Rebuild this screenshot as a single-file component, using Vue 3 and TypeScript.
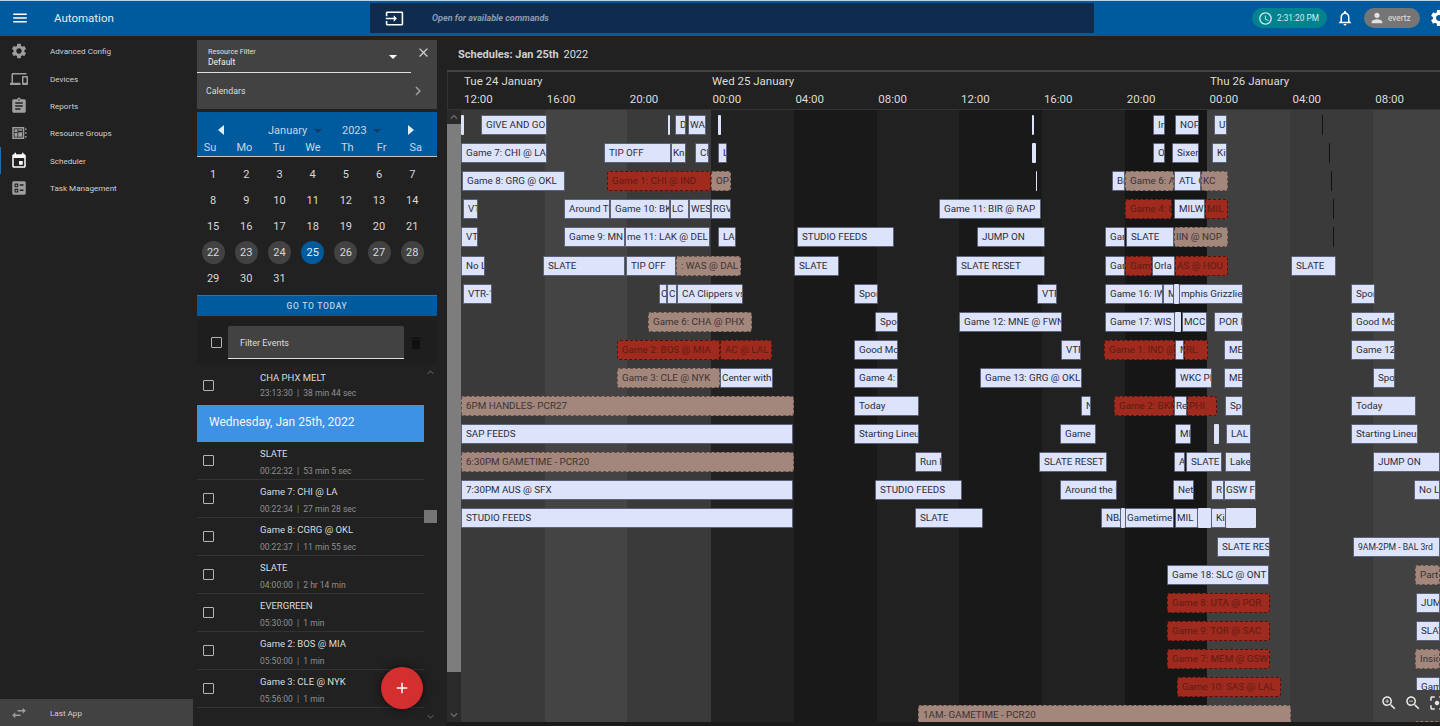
<script setup lang="ts">
// Automation scheduler view: side nav, calendar + event list, timeline
type Kind = 'b' | 'o' | 'r' | 'k'
type Ev = [number, number, number, string, Kind?]

const icons = {
  menu: 'M3 18h18v-2H3v2zm0-5h18v-2H3v2zm0-7v2h18V6H3z',
  gear: 'M19.14 12.94c.04-.3.06-.61.06-.94 0-.32-.02-.64-.07-.94l2.03-1.58c.18-.14.23-.41.12-.61l-1.92-3.32c-.12-.22-.37-.29-.59-.22l-2.39.96c-.5-.38-1.03-.7-1.62-.94l-.36-2.54c-.04-.24-.24-.41-.48-.41h-3.84c-.24 0-.43.17-.47.41l-.36 2.54c-.59.24-1.13.57-1.62.94l-2.39-.96c-.22-.08-.47 0-.59.22L2.74 8.87c-.12.21-.08.47.12.61l2.03 1.58c-.05.3-.09.63-.09.94s.02.64.07.94l-2.03 1.58c-.18.14-.23.41-.12.61l1.92 3.32c.12.22.37.29.59.22l2.39-.96c.5.38 1.03.7 1.62.94l.36 2.54c.05.24.24.41.48.41h3.84c.24 0 .44-.17.47-.41l.36-2.54c.59-.24 1.13-.56 1.62-.94l2.39.96c.22.08.47 0 .59-.22l1.92-3.32c.12-.22.07-.47-.12-.61l-2.01-1.58zM12 15.6c-1.98 0-3.6-1.62-3.6-3.6s1.62-3.6 3.6-3.6 3.6 1.62 3.6 3.6-1.62 3.6-3.6 3.6z',
  devices: 'M4 6h18V4H4c-1.1 0-2 .9-2 2v11H0v3h14v-3H4V6zm19 2h-6c-.55 0-1 .45-1 1v10c0 .55.45 1 1 1h6c.55 0 1-.45 1-1V9c0-.55-.45-1-1-1zm-1 9h-4v-7h4v7z',
  reports: 'M19 3h-4.18C14.4 1.84 13.3 1 12 1c-1.3 0-2.4.84-2.82 2H5c-1.1 0-2 .9-2 2v14c0 1.1.9 2 2 2h14c1.1 0 2-.9 2-2V5c0-1.1-.9-2-2-2zm-7 0c.55 0 1 .45 1 1s-.45 1-1 1-1-.45-1-1 .45-1 1-1zm2 14H7v-2h7v2zm3-4H7v-2h10v2zm0-4H7V7h10v2z',
  groups: 'M3 4h16v16H3V4zm2 2v12h12V6H5zm1 1h4v4H6V7zm5 0h5v2h-5V7zm-5 5h4v5H6v-5zm5-1h5v6h-5v-6zM20 6h2v2h-2V6zm0 5h2v2h-2v-2zm0 5h2v2h-2v-2z',
  event: 'M17 12h-5v5h5v-5zM16 1v2H8V1H6v2H5c-1.11 0-1.99.9-1.99 2L3 19c0 1.1.89 2 2 2h14c1.1 0 2-.9 2-2V5c0-1.1-.9-2-2-2h-1V1h-2zm3 18H5V8h14v11z',
  tasks: 'M5 3h14c1.1 0 2 .9 2 2v14c0 1.1-.9 2-2 2H5c-1.1 0-2-.9-2-2V5c0-1.1.9-2 2-2zm1 3v5h5V6H6zm1.5 1.5h2v2h-2v-2zM13 7v2h5V7h-5zm-7 6v5h5v-5H6zm1.5 1.5h2v2h-2v-2zM13 14v2h5v-2h-5z',
  swap: 'M6.99 11L3 15l3.99 4v-3H14v-2H6.99v-3zM21 9l-3.99-4v3H10v2h7.01v3L21 9z',
  input: 'M21 3.01H3c-1.1 0-2 .9-2 2V9h2V4.99h18v14.03H3V15H1v4.01c0 1.1.9 1.98 2 1.98h18c1.1 0 2-.88 2-1.98v-14c0-1.11-.9-2-2-2zM11 16l4-4-4-4v3H1v2h10v3z',
  bell: 'M12 22c1.1 0 2-.9 2-2h-4c0 1.1.9 2 2 2zm6-6v-5c0-3.07-1.63-5.64-4.5-6.32V4c0-.83-.67-1.5-1.5-1.5s-1.5.67-1.5 1.5v.68C7.64 5.36 6 7.92 6 11v5l-2 2v1h16v-1l-2-2zm-2 1H8v-6c0-2.48 1.51-4.5 4-4.5s4 2.02 4 4.5v6z',
  person: 'M12 12c2.21 0 4-1.79 4-4s-1.79-4-4-4-4 1.79-4 4 1.79 4 4 4zm0 2c-2.67 0-8 1.34-8 4v2h16v-2c0-2.66-5.33-4-8-4z',
  clock: 'M11.99 2C6.47 2 2 6.48 2 12s4.47 10 9.99 10C17.52 22 22 17.52 22 12S17.52 2 11.99 2zM12 20c-4.42 0-8-3.58-8-8s3.58-8 8-8 8 3.58 8 8-3.58 8-8 8zm.5-13H11v6l5.25 3.15.75-1.23-4.5-2.67z',
  trash: 'M6 19c0 1.1.9 2 2 2h8c1.1 0 2-.9 2-2V7H6v12zM19 4h-3.5l-1-1h-5l-1 1H5v2h14V4z',
  close: 'M19 6.41L17.59 5 12 10.59 6.41 5 5 6.41 10.59 12 5 17.59 6.41 19 12 13.41 17.59 19 19 17.59 13.41 12z',
  right: 'M10 6L8.59 7.41 13.17 12l-4.58 4.59L10 18l6-6z',
  plus: 'M19 13h-6v6h-2v-6H5v-2h6V5h2v6h6v2z',
  up: 'M12 8l-6 6 1.41 1.41L12 10.83l4.59 4.58L18 14z',
  down: 'M16.59 8.59L12 13.17 7.41 8.59 6 10l6 6 6-6z',
  zoomIn: 'M15.5 14h-.79l-.28-.27C15.41 12.59 16 11.11 16 9.5 16 5.91 13.09 3 9.5 3S3 5.91 3 9.5 5.91 16 9.5 16c1.61 0 3.09-.59 4.23-1.57l.27.28v.79l5 4.99L20.49 19l-4.99-5zm-6 0C7.01 14 5 11.99 5 9.5S7.01 5 9.5 5 14 7.01 14 9.5 11.99 14 9.5 14zm2.5-4h-2v2H9v-2H7V9h2V7h1v2h2v1z',
  zoomOut: 'M15.5 14h-.79l-.28-.27C15.41 12.59 16 11.11 16 9.5 16 5.91 13.09 3 9.5 3S3 5.91 3 9.5 5.91 16 9.5 16c1.61 0 3.09-.59 4.23-1.57l.27.28v.79l5 4.99L20.49 19l-4.99-5zm-6 0C7.01 14 5 11.99 5 9.5S7.01 5 9.5 5 14 7.01 14 9.5 11.99 14 9.5 14zM7 9h5v1H7z',
  fit: 'M5 15H3v4c0 1.1.9 2 2 2h4v-2H5v-4zM5 5h4V3H5c-1.1 0-2 .9-2 2v4h2V5zm14-2h-4v2h4v4h2V5c0-1.1-.9-2-2-2zm0 16h-4v2h4c1.1 0 2-.9 2-2v-4h-2v4zM12 9c-1.66 0-3 1.34-3 3s1.34 3 3 3 3-1.34 3-3-1.34-3-3-3z',
}

const navItems = [
  { label: 'Advanced Config', icon: icons.gear },
  { label: 'Devices', icon: icons.devices },
  { label: 'Reports', icon: icons.reports },
  { label: 'Resource Groups', icon: icons.groups },
  { label: 'Scheduler', icon: icons.event, active: true },
  { label: 'Task Management', icon: icons.tasks },
]

const weekDays = ['Su', 'Mo', 'Tu', 'We', 'Th', 'Fr', 'Sa']
const days = Array.from({ length: 31 }, (_, i) => i + 1)

const firstRowSub = '23:13:30  |  38 min 44 sec'
const listItems = [
  { title: 'SLATE', sub: '00:22:32  |  53 min 5 sec' },
  { title: 'Game 7: CHI @ LA', sub: '00:22:34  |  27 min 28 sec' },
  { title: 'Game 8: CGRG @ OKL', sub: '00:22:37  |  11 min 55 sec' },
  { title: 'SLATE', sub: '04:00:00  |  2 hr 14 min' },
  { title: 'EVERGREEN', sub: '05:30:00  |  1 min' },
  { title: 'Game 2: BOS @ MIA', sub: '05:50:00  |  1 min' },
  { title: 'Game 3: CLE @ NYK', sub: '05:56:00  |  1 min' },
]

const hours = ['12:00', '16:00', '20:00', '00:00', '04:00', '08:00', '12:00', '16:00', '20:00', '00:00', '04:00', '08:00']
const stripes = [
  [84, '#3a3a3a'], [82, '#444444'], [84, '#3a3a3a'], [83, '#222222'],
  [83, '#191919'], [82, '#212121'], [83, '#191919'], [83, '#212121'],
  [82, '#161616'], [83, '#404040'], [83, '#3a3a3a'], [67, '#424242'],
] as const

// these labels sit almost against the left edge of their box
const tight = new Set(['Kni', 'LC', 'WES', 'RGV', 'C', 'KC', 'MIL', 'Gametime', 'GSW F', 'Center with', 'MCC', 'AS @ HOU', 'IIN @ NOP', 'mphis Grizzlie', 'me 11: LAK @ DEL', 'RL', 'PHI', 'Re', 'Orla', 'WA'])

// [row, x from, x to, text, kind] - x is in page pixels, the grid starts at 461
const events: Ev[] = [
  [0, 461, 464, ''], [0, 481, 547, 'GIVE AND GO'], [0, 668, 670, ''], [0, 675, 686, 'D'], [0, 688, 706, 'WA'], [0, 718, 721, ''],
  [0, 1032, 1034, ''], [0, 1153, 1165, 'In'], [0, 1175, 1199, 'NOP'], [0, 1214, 1227, 'UT'], [0, 1322, 1323, '', 'k'],
  [1, 461, 547, 'Game 7: CHI @ LA'], [1, 604, 671, 'TIP OFF'], [1, 671, 686, 'Kni'], [1, 695, 709, 'Cl'], [1, 718, 727, 'L'],
  [1, 1032, 1036, ''], [1, 1153, 1165, 'Or'], [1, 1172, 1199, 'Sixers'], [1, 1212, 1227, 'Kin'], [1, 1329, 1330, '', 'k'],
  [2, 462, 565, 'Game 8: GRG @ OKL'], [2, 607, 711, 'Game 1: CHI @ IND', 'r'], [2, 711, 731, 'OP', 'o'], [2, 1036, 1037, ''],
  [2, 1112, 1125, 'Br'], [2, 1125, 1174, 'Game 6: A', 'o'], [2, 1201, 1228, 'KC', 'o'], [2, 1174, 1201, 'ATL O'], [2, 1331, 1332, '', 'k'],
  [3, 463, 478, 'VT'], [3, 564, 610, 'Around Th'], [3, 610, 670, 'Game 10: BK'], [3, 670, 689, 'LC'], [3, 689, 711, 'WES'], [3, 711, 731, 'RGV'],
  [3, 939, 1041, 'Game 11: BIR @ RAP'], [3, 1125, 1172, 'Game 4: D', 'r'], [3, 1205, 1228, 'MIL', 'r'], [3, 1174, 1205, 'MILW'], [3, 1333, 1334, '', 'k'],
  [4, 461, 478, 'VT'], [4, 564, 625, 'Game 9: MN'], [4, 625, 710, 'me 11: LAK @ DEL'], [4, 718, 736, 'LA'], [4, 797, 894, 'STUDIO FEEDS'],
  [4, 977, 1045, 'JUMP ON'], [4, 1105, 1125, 'Gar'], [4, 1174, 1228, 'IIN @ NOP', 'o'], [4, 1126, 1174, 'SLATE'], [4, 1333, 1334, '', 'k'],
  [5, 461, 485, 'No L'], [5, 543, 625, 'SLATE'], [5, 626, 676, 'TIP OFF'], [5, 676, 741, ': WAS @ DAL', 'o'], [5, 794, 839, 'SLATE'],
  [5, 956, 1045, 'SLATE RESET'], [5, 1105, 1125, 'Gar'], [5, 1125, 1152, 'Game', 'r'], [5, 1175, 1228, 'AS @ HOU', 'r'], [5, 1152, 1175, 'Orla'], [5, 1291, 1336, 'SLATE'],
  [6, 463, 492, 'VTR-1'], [6, 659, 667, 'C'], [6, 667, 677, 'C'], [6, 677, 743, 'CA Clippers vs L'], [6, 854, 878, 'Spor'], [6, 1037, 1057, 'VTR'],
  [6, 1105, 1163, 'Game 16: IW'], [6, 1163, 1174, 'M'], [6, 1174, 1179, ''], [6, 1179, 1243, 'mphis Grizzlie'], [6, 1351, 1375, 'Spor'],
  [7, 648, 752, 'Game 6: CHA @ PHX', 'o'], [7, 875, 898, 'Spor'], [7, 959, 1062, 'Game 12: MNE @ FWN'], [7, 1105, 1175, 'Game 17: WIS'], [7, 1175, 1181, ''],
  [7, 1182, 1207, 'MCC'], [7, 1214, 1243, 'POR F'], [7, 1351, 1395, 'Good Mo'],
  [8, 617, 720, 'Game 2: BOS @ MIA', 'r'], [8, 720, 772, 'AC @ LAL', 'r'], [8, 854, 898, 'Good Mo'], [8, 1061, 1081, 'VTF'], [8, 1104, 1175, 'Game 1: IND @', 'r'],
  [8, 1184, 1208, 'RL', 'r'], [8, 1175, 1184, 'M'], [8, 1224, 1243, 'MEI'], [8, 1351, 1395, 'Game 12'],
  [9, 617, 720, 'Game 3: CLE @ NYK', 'o'], [9, 720, 773, 'Center with'], [9, 854, 898, 'Game 4:'], [9, 980, 1082, 'Game 13: GRG @ OKL'],
  [9, 1175, 1212, 'WKC PR'], [9, 1224, 1243, 'MEI'], [9, 1373, 1395, 'Spor'],
  [10, 461, 794, '6PM HANDLES- PCR27', 'o'], [10, 854, 919, 'Today'], [10, 1081, 1091, 'N'], [10, 1114, 1174, 'Game 2: BKN', 'r'], [10, 1187, 1217, 'PHI', 'r'],
  [10, 1174, 1187, 'Re'], [10, 1225, 1243, 'Spr'], [10, 1351, 1416, 'Today'],
  [11, 461, 793, 'SAP FEEDS'], [11, 854, 919, 'Starting Lineu'], [11, 1060, 1096, 'Game'], [11, 1175, 1191, 'MII'], [11, 1214, 1219, ''], [11, 1226, 1251, 'LAL I'], [11, 1351, 1418, 'Starting Lineup'],
  [12, 461, 794, '6:30PM GAMETIME - PCR20', 'o'], [12, 915, 942, 'Run H'], [12, 1039, 1107, 'SLATE RESET'], [12, 1174, 1185, 'A'], [12, 1186, 1222, 'SLATE'], [12, 1225, 1251, 'Laker'], [12, 1373, 1440, 'JUMP ON'],
  [13, 461, 793, '7:30PM AUS @ SFX'], [13, 875, 962, 'STUDIO FEEDS'], [13, 1060, 1117, 'Around the H'], [13, 1173, 1194, 'Nets'], [13, 1211, 1224, 'R'], [13, 1224, 1256, 'GSW F'], [13, 1414, 1440, 'No Le'],
  [14, 461, 793, 'STUDIO FEEDS'], [14, 915, 983, 'SLATE'], [14, 1101, 1121, 'NBA'], [14, 1121, 1125, ''], [14, 1125, 1174, 'Gametime'], [14, 1175, 1198, 'MIL'],
  [14, 1198, 1211, ''], [14, 1211, 1226, 'Kin'], [14, 1226, 1256, ''],
  [15, 1217, 1270, 'SLATE RES'], [15, 1353, 1440, '9AM-2PM - BAL 3rd'],
  [16, 1167, 1269, 'Game 18: SLC @ ONT'], [16, 1415, 1440, 'Part', 'o'],
  [17, 1167, 1270, 'Game 8: UTA @ POR', 'r'], [17, 1416, 1440, 'JUM'],
  [18, 1167, 1270, 'Game 9: TOR @ SAC', 'r'], [18, 1416, 1440, 'SLAT'],
  [19, 1167, 1270, 'Game 7: MEM @ GSW', 'r'], [19, 1415, 1440, 'Insid', 'o'],
  [20, 1177, 1281, 'Game 10: SAS @ LAL', 'r'], [20, 1416, 1440, 'Game'],
  [21, 918, 1291, '1AM- GAMETIME - PCR20', 'o'], [21.55, 1415, 1440, '', 'o'],
]

function evStyle(e: Ev) {
  return { left: `${e[1] - 461}px`, width: `${e[2] - e[1]}px`, top: `${5 + e[0] * 28.1}px` }
}
</script>

<template>
  <div class="app">
    <header class="topbar">
      <div class="top-left">
        <svg class="ico menu" viewBox="0 0 24 24"><path :d="icons.menu" /></svg>
        <span class="app-title">Automation</span>
      </div>
      <div class="command">
        <svg class="ico cmd-ico" viewBox="0 0 24 24"><path :d="icons.input" /></svg>
        <span class="cmd-text">Open for available commands</span>
      </div>
      <div class="top-right">
        <div class="pill clock">
          <svg class="ico" viewBox="0 0 24 24"><path :d="icons.clock" /></svg>
          <span>2:31:20 PM</span>
        </div>
        <svg class="ico bell" viewBox="0 0 24 24"><path :d="icons.bell" /></svg>
        <div class="pill user">
          <svg class="ico" viewBox="0 0 24 24"><path :d="icons.person" /></svg>
          <span>evertz</span>
        </div>
        <svg class="ico top-gear" viewBox="0 0 24 24"><path :d="icons.gear" /></svg>
      </div>
    </header>

    <div class="body">
      <nav class="sidenav">
        <div class="nav-list">
          <div v-for="item in navItems" :key="item.label" class="nav-item" :class="{ active: item.active }">
            <svg class="ico" viewBox="0 0 24 24"><path :d="item.icon" /></svg>
            <span>{{ item.label }}</span>
          </div>
        </div>
        <div class="nav-item last-app">
          <svg class="ico" viewBox="0 0 24 24"><path :d="icons.swap" /></svg>
          <span>Last App</span>
        </div>
      </nav>

      <section class="panel">
        <div class="filter-card">
          <div class="select-row">
            <div class="select">
              <div class="select-label">Resource Filter</div>
              <div class="select-value">Default</div>
              <span class="caret white"></span>
            </div>
            <svg class="ico close" viewBox="0 0 24 24"><path :d="icons.close" /></svg>
          </div>
          <div class="calendars-row">
            <span>Calendars</span>
            <svg class="ico" viewBox="0 0 24 24"><path :d="icons.right" /></svg>
          </div>
        </div>

        <div class="cal-head">
          <div class="cal-nav">
            <span class="tri left"></span>
            <span class="cal-sel month">January <i class="caret"></i></span>
            <span class="cal-sel">2023 <i class="caret"></i></span>
            <span class="tri right"></span>
          </div>
          <div class="cal-week">
            <span v-for="d in weekDays" :key="d">{{ d }}</span>
          </div>
        </div>
        <div class="cal-grid">
          <div v-for="d in days" :key="d" class="day">
            <span :class="{ inweek: d >= 22 && d <= 28, sel: d === 25 }">{{ d }}</span>
          </div>
        </div>
        <div class="today-btn">GO TO TODAY</div>

        <div class="filter-bar">
          <span class="check"></span>
          <div class="filter-input">Filter Events</div>
          <svg class="ico trash" viewBox="0 0 24 24"><path :d="icons.trash" /></svg>
        </div>

        <div class="list-wrap">
          <div class="list">
            <div class="row first">
              <span class="check"></span>
              <div class="row-text">
                <div class="row-title">CHA PHX MELT</div>
                <div class="row-sub">{{ firstRowSub }}</div>
              </div>
            </div>
            <div class="date-head">Wednesday, Jan 25th, 2022</div>
            <div v-for="item in listItems" :key="item.sub" class="row">
              <span class="check"></span>
              <div class="row-text">
                <div class="row-title">{{ item.title }}</div>
                <div class="row-sub">{{ item.sub }}</div>
              </div>
            </div>
          </div>
          <div class="list-scroll">
            <svg class="ico" viewBox="0 0 24 24"><path :d="icons.up" /></svg>
            <svg class="ico" viewBox="0 0 24 24"><path :d="icons.down" /></svg>
            <span class="list-thumb"></span>
          </div>
        </div>

        <button class="fab">
          <svg class="ico" viewBox="0 0 24 24"><path :d="icons.plus" /></svg>
        </button>
      </section>

      <main class="main">
        <div class="sched-title"><b>Schedules: Jan 25th</b> 2022</div>
        <div class="timeline">
          <div class="time-head">
            <div class="head-gutter"></div>
            <div class="head-scale">
              <div class="head-days">
                <span class="d1">Tue 24 January</span>
                <span class="d2">Wed 25 January</span>
                <span>Thu 26 January</span>
              </div>
              <div class="head-hours">
                <span v-for="(h, i) in hours" :key="i">{{ h }}</span>
              </div>
            </div>
          </div>
          <div class="time-body">
            <div class="v-scroll">
              <svg class="ico" viewBox="0 0 24 24"><path :d="icons.up" /></svg>
              <div class="v-thumb"></div>
              <svg class="ico" viewBox="0 0 24 24"><path :d="icons.down" /></svg>
            </div>
            <div class="canvas">
              <div class="stripes">
                <div v-for="(s, i) in stripes" :key="i" :style="{ width: `${s[0]}px`, background: s[1] }"></div>
              </div>
              <div class="zoom-box">
                <svg class="ico" viewBox="0 0 24 24"><path :d="icons.zoomIn" /></svg>
                <svg class="ico" viewBox="0 0 24 24"><path :d="icons.zoomOut" /></svg>
                <svg class="ico" viewBox="0 0 24 24"><path :d="icons.fit" /></svg>
              </div>
              <div
                v-for="(e, i) in events"
                :key="i"
                class="ev"
                :class="[e[4] ?? 'b', { tiny: e[1] === 1353, tight: tight.has(e[3]) }]"
                :style="evStyle(e)"
              >{{ e[3] }}</div>
            </div>
          </div>
        </div>
      </main>
    </div>
  </div>
</template>

<style>
html,
body {
  margin: 0;
  background: #212121;
  overflow: hidden;
}
</style>

<style scoped>
.app {
  width: 1440px;
  height: 726px;
  display: flex;
  flex-direction: column;
  overflow: hidden;
  font-family: Roboto, "Liberation Sans", sans-serif;
  color: #e0e0e0;
  background: #212121;
}

.ico {
  fill: currentColor;
  display: block;
  flex: none;
}

/* top bar */
.topbar {
  height: 34px;
  padding-bottom: 1px;
  flex: none;
  display: flex;
  align-items: center;
  background: #005a9e;
  border-top: 1px solid #b9d3e6;
  color: #fff;
}

.top-left {
  width: 370px;
  flex: none;
  display: flex;
  align-items: center;
}

.menu {
  width: 18px;
  height: 18px;
  margin-left: 11px;
}

.app-title {
  margin-left: 25px;
  font-size: 11.5px;
  color: #e3edf5;
}

.command {
  width: 724px;
  height: 30px;
  flex: none;
  display: flex;
  align-items: center;
  background: #0f2c4f;
}

.cmd-ico {
  width: 19px;
  height: 19px;
  margin-left: 15px;
}

.cmd-text {
  margin-left: 28px;
  font-size: 9px;
  font-style: italic;
  font-weight: 700;
  color: #8d9bab;
}

.top-right {
  flex: 1;
  min-width: 0;
  display: flex;
  align-items: center;
  overflow: hidden;
}

.pill {
  height: 20px;
  flex: none;
  border-radius: 10px;
  display: flex;
  align-items: center;
  font-size: 8.3px;
}

.clock {
  width: 75px;
  margin-left: 158px;
  background: #00838f;
  color: #d9eef0;
  padding-left: 6px;
  gap: 4px;
  box-sizing: border-box;
}

.clock .ico {
  width: 15px;
  height: 15px;
}

.bell {
  width: 18px;
  height: 18px;
  margin-left: 9px;
}

.user {
  width: 56px;
  margin-left: 10px;
  background: #757575;
  color: #e0e0e0;
  padding-left: 5px;
  gap: 3px;
  box-sizing: border-box;
}

.user .ico {
  width: 16px;
  height: 16px;
}

.top-gear {
  width: 20px;
  height: 20px;
  margin-left: 9px;
}

.body {
  flex: 1;
  display: flex;
  min-height: 0;
}

/* side nav */
.sidenav {
  width: 193px;
  flex: none;
  display: flex;
  flex-direction: column;
}

.nav-list {
  flex: 1;
  padding-top: 1.5px;
}

.nav-item {
  height: 27.4px;
  display: flex;
  align-items: center;
  font-size: 8.1px;
  color: #d0d0d0;
  box-sizing: border-box;
  padding-left: 10px;
}

.nav-item .ico {
  width: 18px;
  height: 18px;
  color: #9e9e9e;
  margin-right: 22px;
}

.nav-item.active {
  border-left: 1px solid #1a6fb0;
  padding-left: 9px;
}

.nav-item.active .ico {
  color: #fff;
}

.last-app {
  height: 27px;
  background: #424242;
}

/* middle panel */
.panel {
  width: 240px;
  flex: none;
  margin-left: 4px;
  padding-top: 4px;
  display: flex;
  flex-direction: column;
  position: relative;
  min-height: 0;
}

.filter-card {
  height: 69px;
  flex: none;
  background: #424242;
}

.select-row {
  display: flex;
  height: 33px;
}

.select {
  width: 214px;
  box-sizing: border-box;
  padding: 7px 0 0 11px;
  border-bottom: 1px solid #e0e0e0;
  position: relative;
}

.select-label {
  font-size: 7.2px;
  color: #e0e0e0;
}

.select-value {
  font-size: 8.5px;
  margin-top: 1px;
  color: #f0f0f0;
}

.caret {
  display: inline-block;
  width: 0;
  height: 0;
  border-left: 4px solid transparent;
  border-right: 4px solid transparent;
  border-top: 4px solid #0f3d66;
  vertical-align: middle;
  margin-left: 4px;
}

.caret.white {
  position: absolute;
  right: 14px;
  top: 15px;
  border-top-color: #fff;
}

.close {
  width: 15px;
  height: 15px;
  margin: 5px 0 0 5px;
  color: #cfcfcf;
}

.calendars-row {
  height: 36px;
  display: flex;
  align-items: center;
  justify-content: space-between;
  padding: 0 9px;
  font-size: 8.8px;
  color: #dcdcdc;
}

.calendars-row .ico {
  width: 18px;
  height: 18px;
  color: #9e9e9e;
  margin-right: 1px;
}

.cal-head {
  margin-top: 3px;
  height: 44px;
  flex: none;
  background: #005a9e;
  border-bottom: 1px solid #c4c4c4;
  box-sizing: content-box;
}

.cal-nav {
  height: 28px;
  display: flex;
  align-items: center;
  font-size: 11px;
  color: #c7d8e6;
  box-sizing: border-box;
  padding-top: 8px;
}

.cal-sel {
  margin-left: 15px;
  white-space: nowrap;
}

.cal-sel.month {
  margin-left: 44px;
  width: 59px;
}

.tri {
  width: 0;
  height: 0;
  border-top: 5px solid transparent;
  border-bottom: 5px solid transparent;
}

.tri.left {
  margin-left: 21px;
  border-right: 6px solid #e6eef5;
}

.tri.right {
  margin-left: 27px;
  border-left: 6px solid #e6eef5;
}

.cal-week {
  display: grid;
  grid-template-columns: repeat(7, 1fr);
  text-align: center;
  font-size: 11px;
  color: #c7d8e6;
  margin: 1px 4px 0 -4px;
}

.cal-grid {
  display: grid;
  grid-template-columns: repeat(7, 33.2px);
  grid-auto-rows: 26px;
  padding-top: 4px;
  height: 134px;
  flex: none;
  box-sizing: border-box;
  margin-left: -0.5px;
}

.day {
  display: flex;
  align-items: center;
  justify-content: center;
  font-size: 11px;
  color: #d8d8d8;
}

.day span {
  width: 23px;
  height: 23px;
  flex: none;
  border-radius: 50%;
  display: flex;
  align-items: center;
  justify-content: center;
}

.day .inweek {
  background: #424242;
}

.day .sel {
  background: #005a9e;
  color: #e8f1f8;
}

.today-btn {
  height: 21px;
  flex: none;
  margin-top: 4px;
  background: #005a9e;
  font-size: 8.5px;
  font-weight: 500;
  letter-spacing: 0.7px;
  color: #bcd2e4;
  display: flex;
  align-items: center;
  justify-content: center;
  border-top: 1px solid #3e6f96;
  box-sizing: border-box;
}

.filter-bar {
  height: 45px;
  flex: none;
  margin-top: 4px;
  display: flex;
  align-items: center;
  background: #1e1e1e;
  padding-left: 14px;
}

.check {
  width: 9px;
  height: 9px;
  flex: none;
  border: 1.5px solid #b4b4b4;
  border-radius: 1px;
  display: block;
}

.filter-input {
  width: 176px;
  height: 33px;
  margin-left: 6px;
  padding: 2px 0 0 12px;
  box-sizing: border-box;
  background: #424242;
  border-bottom: 1px solid #e0e0e0;
  border-radius: 2px 2px 0 0;
  display: flex;
  align-items: center;
  font-size: 9px;
  color: #dedede;
}

.trash {
  width: 16px;
  height: 16px;
  margin-left: 4px;
  color: #111;
}

.list-wrap {
  flex: 1;
  display: flex;
  margin-top: 1px;
  min-height: 0;
  overflow: hidden;
}

.list {
  width: 227px;
  flex: none;
}

.row {
  height: 38px;
  display: flex;
  align-items: center;
  padding-left: 6px;
  box-sizing: border-box;
  border-bottom: 1px solid #333;
}

.row.first {
  height: 39px;
  border-bottom: none;
}

.row-text {
  margin-left: 46px;
  padding-top: 3px;
}

.first .row-text {
  padding-top: 0;
}

.row-title {
  font-size: 9.5px;
  color: #dcdcdc;
  line-height: 12px;
}

.row-sub {
  font-size: 8.5px;
  color: #8f8f8f;
  line-height: 12px;
  margin-top: 5px;
  white-space: pre;
}

.first .row-sub {
  margin-top: 3px;
}

.date-head {
  height: 37px;
  background: #3e92e6;
  display: flex;
  align-items: center;
  padding: 0 0 4px 12px;
  box-sizing: border-box;
  font-size: 12px;
  color: #f0f6fc;
}

.list-scroll {
  width: 13px;
  position: relative;
  display: flex;
  flex-direction: column;
  justify-content: space-between;
  color: #555;
  padding-bottom: 3px;
}

.list-scroll .ico {
  width: 13px;
  height: 13px;
}

.list-thumb {
  position: absolute;
  left: 0;
  top: 144px;
  width: 13px;
  height: 13px;
  background: #757575;
}

.fab {
  position: absolute;
  right: 14px;
  bottom: 17px;
  width: 42px;
  height: 42px;
  border: none;
  border-radius: 50%;
  padding: 0;
  background: #d32f2f;
  color: #fff;
  display: flex;
  align-items: center;
  justify-content: center;
  box-shadow: 0 0 8px rgba(0, 0, 0, 0.6);
}

.fab .ico {
  width: 18px;
  height: 18px;
}

/* timeline */
.main {
  flex: 1;
  min-width: 0;
  margin-left: 10px;
  display: flex;
  flex-direction: column;
}

.sched-title {
  height: 34px;
  flex: none;
  display: flex;
  align-items: center;
  gap: 2px;
  padding: 2px 0 0 11px;
  font-size: 11px;
  color: #dedede;
  white-space: pre;
  box-sizing: border-box;
}

.sched-title b {
  font-weight: 700;
  color: #cfcfcf;
}

.timeline {
  flex: 1;
  display: flex;
  flex-direction: column;
  min-height: 0;
  border-top: 2px solid #424242;
  border-bottom: 4px solid #1a1a1a;
  overflow: hidden;
}

.time-head {
  height: 37px;
  flex: none;
  display: flex;
  border-bottom: 1px solid #333;
}

.head-gutter {
  width: 14px;
  flex: none;
  border-left: 1px solid #333;
  box-sizing: border-box;
}

.head-scale {
  flex: 1;
  font-size: 11.5px;
  color: #dcdcdc;
  overflow: hidden;
}

.head-days {
  height: 16px;
  display: flex;
  align-items: flex-end;
  padding-left: 3px;
  white-space: nowrap;
}

.d1 {
  width: 248px;
  flex: none;
}

.d2 {
  width: 498px;
  flex: none;
}

.head-hours {
  display: flex;
  margin-top: 4px;
}

.head-hours span {
  width: 82.85px;
  flex: none;
  padding-left: 3px;
  box-sizing: border-box;
}

.time-body {
  flex: 1;
  display: flex;
  min-height: 0;
}

.v-scroll {
  width: 14px;
  flex: none;
  display: flex;
  flex-direction: column;
  background: #2a2a2a;
  color: #777;
}

.v-scroll .ico {
  width: 14px;
  height: 14px;
}

.v-thumb {
  height: 549px;
  background: #7d7d7d;
  margin-bottom: 36px;
}

.canvas {
  flex: 1;
  position: relative;
  overflow: hidden;
}

.stripes {
  display: flex;
  height: 100%;
}

.stripes div {
  flex: none;
}

.ev {
  position: absolute;
  height: 20px;
  box-sizing: border-box;
  padding-left: 4px;
  font-size: 9.8px;
  line-height: 18px;
  white-space: nowrap;
  overflow: hidden;
  border-radius: 1px;
}

.ev:empty {
  padding-left: 0;
}

.ev.tight {
  padding-left: 1px;
}

.ev.tiny {
  font-size: 8.6px;
}

.ev.b {
  background: #dde3fa;
  border: 1px solid #5c6278;
  color: #2a2e3a;
}

.ev.b:empty {
  border-width: 0;
}

.ev.o {
  background: #a3867c;
  border: 1px dashed #5f4e47;
  border-radius: 3px;
  color: #3d3532;
}

.ev.r {
  background: #a02a1d;
  border: 1px dashed #4a1610;
  border-radius: 3px;
  color: #5e1d15;
}

.ev.k {
  background: #111;
}

.zoom-box {
  position: absolute;
  right: 0;
  bottom: 3px;
  width: 67px;
  height: 29px;
  z-index: 1;
  box-sizing: border-box;
  padding: 0 0 3px 7px;
  display: flex;
  align-items: center;
  gap: 6px;
  background: #424242;
  color: #e8e8e8;
}

.zoom-box .ico {
  width: 18px;
  height: 18px;
}
</style>
